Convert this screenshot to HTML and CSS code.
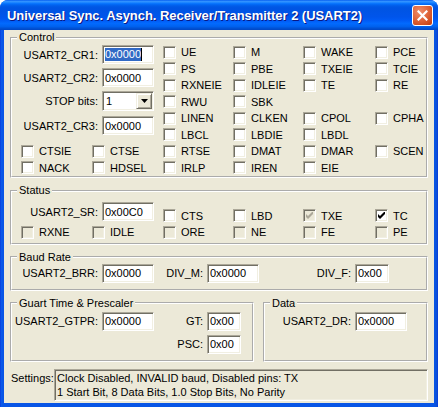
FILE: index.html
```html
<!DOCTYPE html>
<html>

<head>
  <meta charset="utf-8">
  <title>Universal Sync. Asynch. Receiver/Transmitter 2 (USART2)</title>
  <meta name="viewport" content="width=device-width, initial-scale=1">
  <link rel="stylesheet" href="styles.css">
</head>
<body>
  <div class="window">
    <div class="titlebar">
      <span class="title">Universal Sync. Asynch. Receiver/Transmitter 2 (USART2)</span>
      <span class="close">
        <svg width="11" height="11" viewBox="0 0 11 11"><path d="M1.5 1.5 L9.5 9.5 M9.5 1.5 L1.5 9.5" stroke="#fff" stroke-width="2.2" stroke-linecap="square"/></svg>
      </span>
    </div>
    <div class="client">

      <fieldset class="group control">
        <legend>Control</legend>
        <div class="bits">
          <div class="regs">
            <div class="field"><span class="lbl">USART2_CR1:</span><span class="edit w52"><span class="sel">0x0000</span><span class="caret"></span></span></div>
            <div class="field"><span class="lbl">USART2_CR2:</span><span class="edit w52">0x0000</span></div>
            <div class="field combo-row"><span class="lbl">STOP bits:</span><span class="combo"><span class="value">1</span><span class="drop"><svg width="7" height="4" viewBox="0 0 7 4"><path d="M0 0 H7 L3.5 4 Z" fill="#000"/></svg></span></span></div>
            <div class="field"><span class="lbl">USART2_CR3:</span><span class="edit w52">0x0000</span></div>
          </div>
          <label class="cb"><span class="box"></span>UE</label>
          <label class="cb"><span class="box"></span>M</label>
          <label class="cb"><span class="box"></span>WAKE</label>
          <label class="cb"><span class="box"></span>PCE</label>

          <label class="cb"><span class="box"></span>PS</label>
          <label class="cb"><span class="box"></span>PBE</label>
          <label class="cb"><span class="box"></span>TXEIE</label>
          <label class="cb"><span class="box"></span>TCIE</label>

          <label class="cb"><span class="box"></span>RXNEIE</label>
          <label class="cb"><span class="box"></span>IDLEIE</label>
          <label class="cb"><span class="box"></span>TE</label>
          <label class="cb"><span class="box"></span>RE</label>

          <label class="cb"><span class="box"></span>RWU</label>
          <label class="cb"><span class="box"></span>SBK</label>
          <span></span>
          <span></span>

          <label class="cb"><span class="box"></span>LINEN</label>
          <label class="cb"><span class="box"></span>CLKEN</label>
          <label class="cb"><span class="box"></span>CPOL</label>
          <label class="cb"><span class="box"></span>CPHA</label>

          <label class="cb"><span class="box"></span>LBCL</label>
          <label class="cb"><span class="box"></span>LBDIE</label>
          <label class="cb"><span class="box"></span>LBDL</label>
          <span></span>

          <label class="cb"><span class="box"></span>CTSIE</label>
          <label class="cb"><span class="box"></span>CTSE</label>
          <label class="cb"><span class="box"></span>RTSE</label>
          <label class="cb"><span class="box"></span>DMAT</label>
          <label class="cb"><span class="box"></span>DMAR</label>
          <label class="cb"><span class="box"></span>SCEN</label>

          <label class="cb"><span class="box"></span>NACK</label>
          <label class="cb"><span class="box"></span>HDSEL</label>
          <label class="cb"><span class="box"></span>IRLP</label>
          <label class="cb"><span class="box"></span>IREN</label>
          <label class="cb"><span class="box"></span>EIE</label>
          <span></span>
        </div>
      </fieldset>

      <fieldset class="group status">
        <legend>Status</legend>
        <div class="bits">
          <div class="regs">
            <div class="field"><span class="lbl">USART2_SR:</span><span class="edit w52">0x00C0</span></div>
          </div>
          <label class="cb top"><span class="box"></span>CTS</label>
          <label class="cb top"><span class="box"></span>LBD</label>
          <label class="cb top"><span class="box off"><svg class="tick" width="7" height="7" viewBox="0 0 7 7"><path d="M0 2 L2 4 L7 -1 V2 L2 7 L0 5 Z" fill="#ACA899"/></svg></span>TXE</label>
          <label class="cb top"><span class="box"><svg class="tick" width="7" height="7" viewBox="0 0 7 7"><path d="M0 2 L2 4 L7 -1 V2 L2 7 L0 5 Z" fill="#000"/></svg></span>TC</label>

          <label class="cb"><span class="box off"></span>RXNE</label>
          <label class="cb"><span class="box off"></span>IDLE</label>
          <label class="cb"><span class="box off"></span>ORE</label>
          <label class="cb"><span class="box off"></span>NE</label>
          <label class="cb"><span class="box off"></span>FE</label>
          <label class="cb"><span class="box off"></span>PE</label>
        </div>
      </fieldset>

      <fieldset class="group baud">
        <legend>Baud Rate</legend>
        <div class="line">
          <span class="lbl l86">USART2_BRR:</span><span class="edit w52">0x0000</span>
          <span class="lbl l49">DIV_M:</span><span class="edit w52">0x0000</span>
          <span class="lbl l92">DIV_F:</span><span class="edit w34">0x00</span>
        </div>
      </fieldset>

      <div class="pair">
        <fieldset class="group guart">
          <legend>Guart Time &amp; Prescaler</legend>
          <div class="line">
            <span class="lbl l86">USART2_GTPR:</span><span class="edit w52">0x0000</span>
            <span class="lbl l49">GT:</span><span class="edit w34">0x00</span>
          </div>
          <div class="line">
            <span class="lbl l191">PSC:</span><span class="edit w34">0x00</span>
          </div>
        </fieldset>
        <fieldset class="group data">
          <legend>Data</legend>
          <div class="line">
            <span class="lbl l86">USART2_DR:</span><span class="edit w52">0x0000</span>
          </div>
        </fieldset>
      </div>

      <div class="settings">
        <span class="settings-label">Settings:</span>
        <div class="settings-box">Clock Disabled, INVALID baud, Disabled pins: TX<br>1 Start Bit, 8 Data Bits, 1.0 Stop Bits, No Parity</div>
      </div>

    </div>
  </div>
</body>
</html>
```

FILE: styles.css
```css
/* basic style */
body {
  margin: 0;
  background: #fff;
}

.window {
  width: 438px;
  height: 407px;
  box-sizing: border-box;
  padding: 0 4px 4px;
  background: linear-gradient(to right, #0831D9 0, #0A5AEA 1px, #0855E6 3px, #0855E6 434px, #0A4FD8 437px, #0831D9 438px);
  border-radius: 8px 8px 0 0;
  font-family: "Liberation Sans", Arial, sans-serif;
  font-size: 11px;
  color: #000;
}

/* title bar */
.titlebar {
  height: 30px;
  margin: 0 -4px;
  padding: 0 5px 0 7px;
  display: flex;
  align-items: center;
  justify-content: space-between;
  border-radius: 8px 8px 0 0;
  background: linear-gradient(to bottom, #0058EE 0%, #3593FF 4%, #288EFF 7%, #127DFF 10%, #036FFC 13%, #0262EE 17%, #0057E5 23%, #0054E3 30%, #0055EB 56%, #005BF5 68%, #026AFE 78%, #0062EF 88%, #0052D6 94%, #0046C4 100%);
}

.title {
  color: #fff;
  font-weight: bold;
  font-size: 13px;
  letter-spacing: -0.05px;
  text-shadow: 1px 1px 0 #0A1883;
}

.close {
  width: 21px;
  height: 21px;
  box-sizing: border-box;
  border: 1px solid #fff;
  border-radius: 3px;
  display: flex;
  align-items: center;
  justify-content: center;
  background: radial-gradient(circle at 35% 30%, #EE8E6C 0%, #E36C42 40%, #CE4A1C 80%, #B93B10 100%);
}

/* client area */
.client {
  height: 373px;
  box-sizing: border-box;
  padding: 1px 6px 0;
  background: #ECE9D8;
}

fieldset.group {
  margin: 0;
  padding: 0;
  min-width: 0;
  border: 2px groove #fff;
}

fieldset.group legend {
  margin-left: 5px;
  padding: 0 2px;
  line-height: 13px;
}

.bits {
  display: grid;
  grid-template-columns: 71px 71px 70px 70px 72px 1fr;
  padding-left: 9px;
}

.control .bits {
  grid-template-rows: repeat(8, 16.5px);
}

.regs {
  grid-column: span 2;
  padding-top: 1px;
}

.control .regs {
  grid-row: span 6;
}

.field {
  display: flex;
  align-items: center;
  height: 19px;
  margin-bottom: 4px;
}

.combo-row {
  height: 20px;
  margin-top: 1px;
  margin-bottom: 5px;
}

.regs .lbl {
  width: 77px;
}

.lbl {
  margin-right: 4px;
  text-align: right;
  flex: none;
}

.l86 { width: 86px; }
.l49 { width: 49px; }
.l92 { width: 92px; }
.l191 { width: 191px; }

/* sunken edit box */
.edit {
  height: 19px;
  box-sizing: border-box;
  display: flex;
  align-items: center;
  background: #fff;
  border: 1px solid;
  border-color: #ACA899 #fff #fff #ACA899;
  box-shadow: inset 1px 1px 0 #716F64, inset -1px -1px 0 #F1EFE2;
  padding: 0 1px 0 2px;
  flex: none;
}

.w52 { width: 52px; }
.w34 { width: 34px; }

.sel {
  background: #316AC5;
  color: #fff;
  line-height: 13px;
}

.caret {
  width: 1px;
  height: 13px;
  background: #000;
}

.combo {
  width: 52px;
  height: 20px;
  box-sizing: border-box;
  display: flex;
  align-items: center;
  background: #fff;
  border: 1px solid;
  border-color: #ACA899 #fff #fff #ACA899;
  box-shadow: inset 1px 1px 0 #716F64, inset -1px -1px 0 #F1EFE2;
  padding: 1px 1px 1px 3px;
}

.combo .value {
  flex: 1;
}

.drop {
  width: 16px;
  height: 16px;
  box-sizing: border-box;
  display: flex;
  align-items: center;
  justify-content: center;
  background: #ECE9D8;
  border: 1px solid;
  border-color: #F1EFE2 #716F64 #716F64 #F1EFE2;
  box-shadow: inset 1px 1px 0 #fff, inset -1px -1px 0 #ACA899;
}

/* checkboxes */
.cb {
  display: flex;
  align-items: center;
  gap: 5px;
  white-space: nowrap;
}

.status .cb {
  height: 16.5px;
}

.status .cb.top {
  align-self: end;
}

.status .regs .field {
  margin-bottom: 3px;
}

.box {
  width: 13px;
  height: 13px;
  box-sizing: border-box;
  display: flex;
  align-items: center;
  justify-content: center;
  background: #fff;
  border: 1px solid;
  border-color: #ACA899 #fff #fff #ACA899;
  box-shadow: inset 1px 1px 0 #716F64, inset -1px -1px 0 #F1EFE2;
  flex: none;
}

.box.off {
  background: #ECE9D8;
}

/* status group */
.status {
  margin-top: 6px !important;
}

.status .bits {
  padding-top: 4px;
  padding-bottom: 2px;
}

/* baud and guart groups */
.baud {
  margin-top: 6px !important;
  padding-bottom: 6px !important;
}

.line {
  display: flex;
  align-items: center;
}

.pair {
  display: flex;
  gap: 9px;
  margin-top: 6px;
}

.guart {
  width: 244px;
  box-sizing: border-box;
  padding: 2px 0 6px !important;
}

.guart .line + .line {
  margin-top: 4px;
}

.data {
  flex: 1;
  padding-top: 2px !important;
}

/* settings */
.settings {
  display: flex;
  margin-top: 7px;
}

.settings-label {
  width: 43px;
  padding: 3px 0 0 1px;
}

.settings-box {
  flex: 1;
  height: 32px;
  box-sizing: border-box;
  padding: 1px 2px 0;
  line-height: 14px;
  border: 1px solid;
  border-color: #ACA899 #fff #fff #ACA899;
  box-shadow: inset 1px 1px 0 #716F64, inset -1px -1px 0 #F1EFE2;
}
```
